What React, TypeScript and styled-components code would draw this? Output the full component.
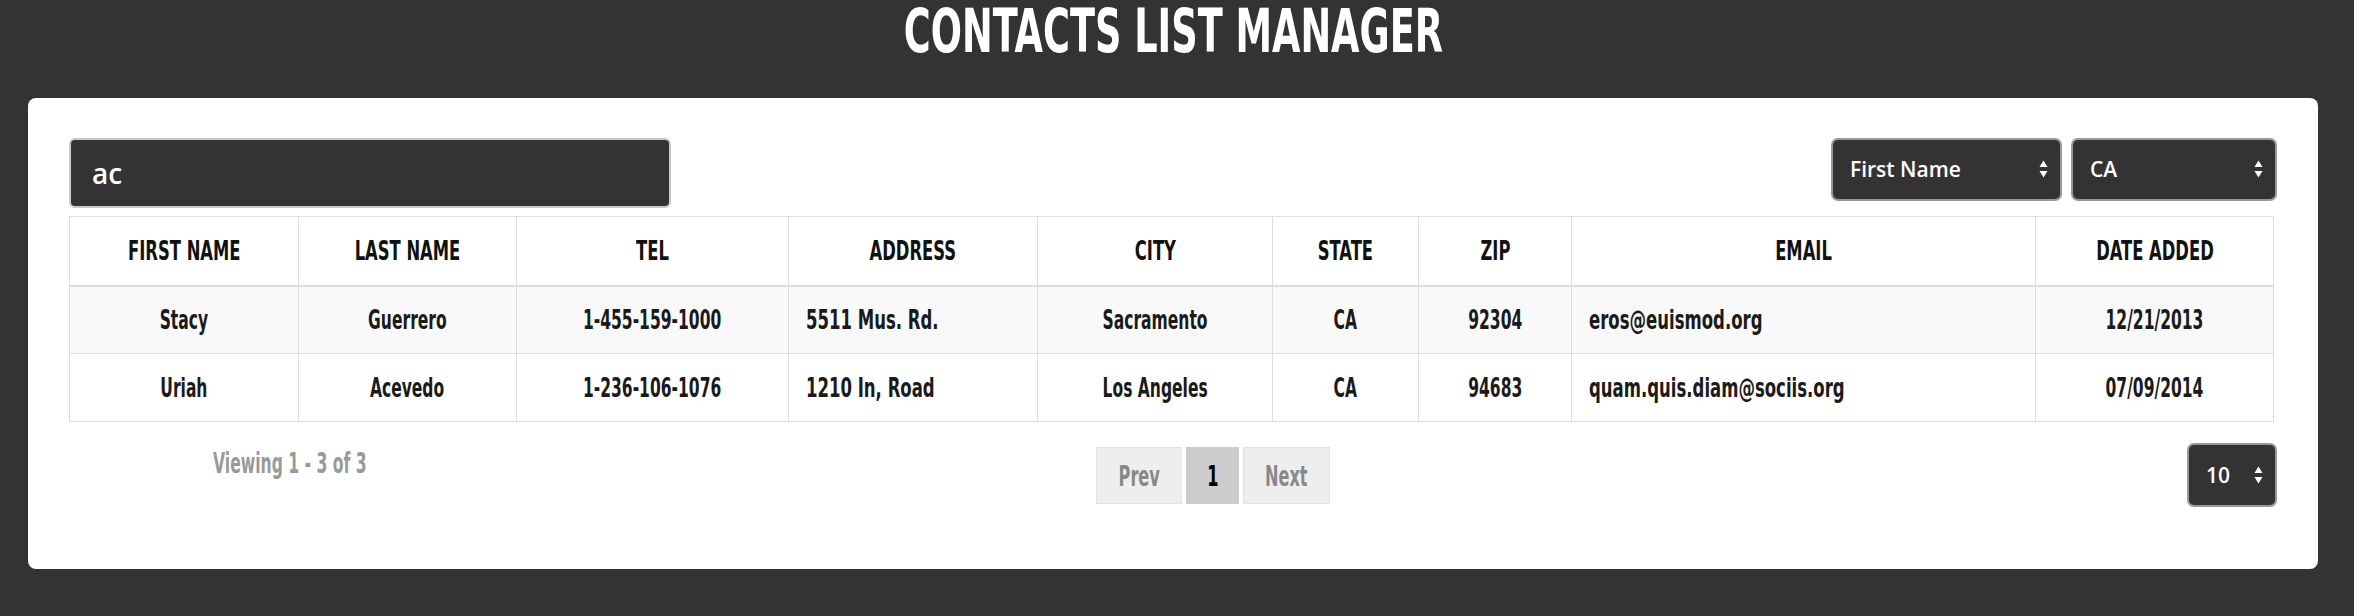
import React from 'react';
import styled, { createGlobalStyle } from 'styled-components';

const narrow = `"DejaVu Sans Condensed", "DejaVu Sans", "Liberation Sans", sans-serif`;
const uiFont = `"Open Sans", "Noto Sans", sans-serif`;

const GlobalStyle = createGlobalStyle`
  html, body { margin: 0; padding: 0; background: #333333; }
  body { font-family: ${narrow}; font-stretch: condensed; }
  * { box-sizing: border-box; }
`;

const Squeeze = styled.span<{ $scale?: number; $origin?: string }>`
  display: inline-block;
  white-space: nowrap;
  transform: scaleX(${(p) => p.$scale ?? 0.68});
  transform-origin: ${(p) => p.$origin ?? 'center'};
`;

const Page = styled.div`
  padding: 0 36px 46px 28px;
`;

const Title = styled.h1`
  margin: 0;
  height: 98px;
  text-align: center;
  color: #ffffff;
  font-family: ${narrow};
  font-stretch: condensed;
  font-weight: 700;
  font-size: 60px;
  line-height: 62px;
  text-transform: uppercase;
`;

const Card = styled.main`
  background: #ffffff;
  border-radius: 8px;
  padding: 40px 41px 62px;
`;

const Toolbar = styled.div`
  display: flex;
  justify-content: space-between;
  align-items: flex-start;
  margin-bottom: 8px;
`;

const SearchInput = styled.input`
  width: 602px;
  height: 70px;
  background: #333333;
  border: 2px solid #c9c9c9;
  border-radius: 6px;
  color: #ffffff;
  font-family: ${uiFont};
  font-stretch: normal;
  font-weight: 600;
  font-size: 28px;
  padding: 0 21px;
  outline: none;
`;

const Selects = styled.div`
  display: flex;
  gap: 9px;
`;

const SelectBox = styled.div<{ $w: number; $h: number }>`
  display: flex;
  align-items: center;
  justify-content: space-between;
  width: ${(p) => p.$w}px;
  height: ${(p) => p.$h}px;
  background: #333333;
  border: 2px solid #999999;
  border-radius: 7px;
  color: #ffffff;
  font-family: ${uiFont};
  font-stretch: 92%;
  font-weight: 600;
  font-size: 21px;
  padding: 0 12px 1px 17px;
  cursor: pointer;
`;

const SelectArrows = () => (
  <svg width="9" height="18" viewBox="0 0 9 18" aria-hidden="true">
    <path d="M0.5 7 L4.5 0.5 L8.5 7 Z" fill="#ffffff" />
    <path d="M0.5 11 L4.5 17.5 L8.5 11 Z" fill="#ffffff" />
  </svg>
);

const Dropdown = ({ w, h, value }: { w: number; h: number; value: string }) => (
  <SelectBox $w={w} $h={h} role="combobox">
    <span>{value}</span>
    <SelectArrows />
  </SelectBox>
);

const Table = styled.table`
  width: 2205px;
  table-layout: fixed;
  border-collapse: collapse;
  border: 1px solid #dddddd;
`;

const Th = styled.th`
  height: 69px;
  padding: 0 8px;
  border: 1px solid #dddddd;
  border-bottom: 2px solid #dddddd;
  font-family: ${narrow};
  font-stretch: condensed;
  font-weight: 700;
  font-size: 26px;
  color: #111111;
  text-align: center;
  vertical-align: middle;
  text-transform: uppercase;
  white-space: nowrap;
`;

const Row = styled.tr<{ $striped?: boolean }>`
  background: ${(p) => (p.$striped ? '#f9f9f9' : '#ffffff')};
`;

const Td = styled.td<{ $left?: boolean }>`
  height: 68px;
  padding: 0 ${(p) => (p.$left ? '17px' : '8px')};
  border: 1px solid #dddddd;
  font-family: ${narrow};
  font-stretch: condensed;
  font-weight: 700;
  font-size: 27px;
  color: #1a1a1a;
  text-align: ${(p) => (p.$left ? 'left' : 'center')};
  vertical-align: middle;
  white-space: nowrap;
`;

const Footer = styled.div`
  display: grid;
  grid-template-columns: 441px 586px auto 1fr;
  align-items: start;
  margin-top: 21px;
`;

const Viewing = styled.div`
  grid-column: 1;
  text-align: center;
  color: #999999;
  font-weight: 700;
  font-size: 28px;
  line-height: 32px;
  padding-top: 5px;
`;

const Pagination = styled.nav`
  grid-column: 3;
  display: flex;
  gap: 4px;
  margin-top: 4px;
`;

const PageButton = styled.span<{ $active?: boolean; $w: number }>`
  display: flex;
  align-items: center;
  justify-content: center;
  width: ${(p) => p.$w}px;
  height: 57px;
  padding-top: 2px;
  background: ${(p) => (p.$active ? '#cccccc' : '#eeeeee')};
  border: 1px solid ${(p) => (p.$active ? '#cccccc' : '#e2e2e2')};
  color: ${(p) => (p.$active ? '#000000' : '#888888')};
  font-weight: 700;
  font-size: 28px;
  cursor: pointer;
`;

const PageSize = styled.div`
  grid-column: 4;
  justify-self: end;
`;

const columns = [
  { label: 'First Name', w: 229 },
  { label: 'Last Name', w: 218 },
  { label: 'Tel', w: 272 },
  { label: 'Address', w: 249 },
  { label: 'City', w: 235 },
  { label: 'State', w: 146 },
  { label: 'Zip', w: 153 },
  { label: 'Email', w: 464 },
  { label: 'Date Added', w: 238 },
];

const rows = [
  ['Stacy', 'Guerrero', '1-455-159-1000', '5511 Mus. Rd.', 'Sacramento', 'CA', '92304', 'eros@euismod.org', '12/21/2013'],
  ['Uriah', 'Acevedo', '1-236-106-1076', '1210 In, Road', 'Los Angeles', 'CA', '94683', 'quam.quis.diam@sociis.org', '07/09/2014'],
];

const leftCols = new Set([3, 7]);

export default function App() {
  return (
    <>
      <GlobalStyle />
      <Page>
        <Title>
          <Squeeze $scale={0.68}>Contacts List Manager</Squeeze>
        </Title>
        <Card>
          <Toolbar>
            <SearchInput defaultValue="ac" />
            <Selects>
              <Dropdown w={231} h={63} value="First Name" />
              <Dropdown w={206} h={63} value="CA" />
            </Selects>
          </Toolbar>
          <Table>
            <colgroup>
              {columns.map((c) => (
                <col key={c.label} style={{ width: c.w }} />
              ))}
            </colgroup>
            <thead>
              <tr>
                {columns.map((c) => (
                  <Th key={c.label}>
                    <Squeeze $scale={0.7}>{c.label}</Squeeze>
                  </Th>
                ))}
              </tr>
            </thead>
            <tbody>
              {rows.map((r, i) => (
                <Row key={i} $striped={i % 2 === 0}>
                  {r.map((v, j) => (
                    <Td key={j} $left={leftCols.has(j)}>
                      <Squeeze $scale={leftCols.has(j) ? 0.68 : 0.64} $origin={leftCols.has(j) ? 'left' : 'center'}>
                        {v}
                      </Squeeze>
                    </Td>
                  ))}
                </Row>
              ))}
            </tbody>
          </Table>
          <Footer>
            <Viewing>
              <Squeeze $scale={0.62}>Viewing 1 - 3 of 3</Squeeze>
            </Viewing>
            <Pagination>
              <PageButton $w={86}>
                <Squeeze $scale={0.64}>Prev</Squeeze>
              </PageButton>
              <PageButton $w={53} $active>
                <Squeeze $scale={0.64}>1</Squeeze>
              </PageButton>
              <PageButton $w={87}>
                <Squeeze $scale={0.64}>Next</Squeeze>
              </PageButton>
            </Pagination>
            <PageSize>
              <Dropdown w={90} h={64} value="10" />
            </PageSize>
          </Footer>
        </Card>
      </Page>
    </>
  );
}
